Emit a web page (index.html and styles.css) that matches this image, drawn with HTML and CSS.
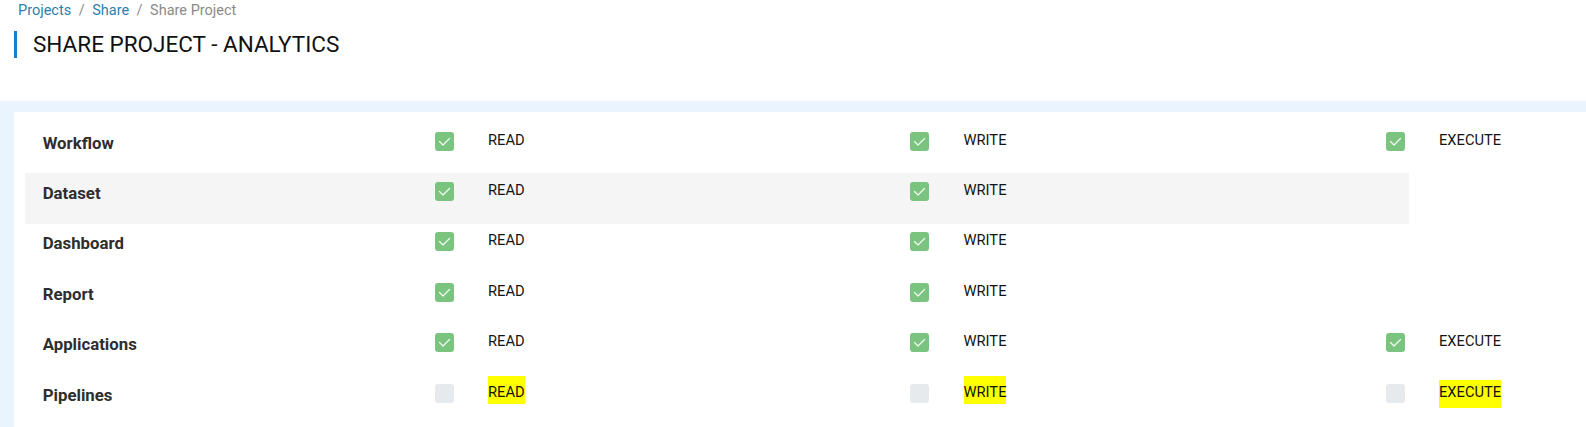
FILE: index.html
```html
<!DOCTYPE html>
<html lang="en">
<head>
<meta charset="utf-8">
<title>Share Project - Analytics</title>
<link rel="stylesheet" href="styles.css">
</head>
<body>
<div class="page">
  <nav class="crumbs">
    <a class="crumb-link" href="#">Projects</a><span class="sep">/</span><a class="crumb-link" href="#">Share</a><span class="sep">/</span><span class="crumb-current">Share Project</span>
  </nav>
  <h1 class="title">SHARE PROJECT - ANALYTICS</h1>
  <main class="band">
    <section class="panel">
      <div class="row">
        <div class="label">Workflow</div>
        <div class="perm"><span class="cb on"><svg viewBox="0 0 19 19"><polyline points="4.5,9.5 8,13 14.5,6.5"/></svg></span><span class="ptxt">READ</span></div>
        <div class="perm"><span class="cb on"><svg viewBox="0 0 19 19"><polyline points="4.5,9.5 8,13 14.5,6.5"/></svg></span><span class="ptxt">WRITE</span></div>
        <div class="perm"><span class="cb on"><svg viewBox="0 0 19 19"><polyline points="4.5,9.5 8,13 14.5,6.5"/></svg></span><span class="ptxt">EXECUTE</span></div>
      </div>
      <div class="row alt">
        <div class="label">Dataset</div>
        <div class="perm"><span class="cb on"><svg viewBox="0 0 19 19"><polyline points="4.5,9.5 8,13 14.5,6.5"/></svg></span><span class="ptxt">READ</span></div>
        <div class="perm"><span class="cb on"><svg viewBox="0 0 19 19"><polyline points="4.5,9.5 8,13 14.5,6.5"/></svg></span><span class="ptxt">WRITE</span></div>
      </div>
      <div class="row">
        <div class="label">Dashboard</div>
        <div class="perm"><span class="cb on"><svg viewBox="0 0 19 19"><polyline points="4.5,9.5 8,13 14.5,6.5"/></svg></span><span class="ptxt">READ</span></div>
        <div class="perm"><span class="cb on"><svg viewBox="0 0 19 19"><polyline points="4.5,9.5 8,13 14.5,6.5"/></svg></span><span class="ptxt">WRITE</span></div>
      </div>
      <div class="row">
        <div class="label">Report</div>
        <div class="perm"><span class="cb on"><svg viewBox="0 0 19 19"><polyline points="4.5,9.5 8,13 14.5,6.5"/></svg></span><span class="ptxt">READ</span></div>
        <div class="perm"><span class="cb on"><svg viewBox="0 0 19 19"><polyline points="4.5,9.5 8,13 14.5,6.5"/></svg></span><span class="ptxt">WRITE</span></div>
      </div>
      <div class="row">
        <div class="label">Applications</div>
        <div class="perm"><span class="cb on"><svg viewBox="0 0 19 19"><polyline points="4.5,9.5 8,13 14.5,6.5"/></svg></span><span class="ptxt">READ</span></div>
        <div class="perm"><span class="cb on"><svg viewBox="0 0 19 19"><polyline points="4.5,9.5 8,13 14.5,6.5"/></svg></span><span class="ptxt">WRITE</span></div>
        <div class="perm"><span class="cb on"><svg viewBox="0 0 19 19"><polyline points="4.5,9.5 8,13 14.5,6.5"/></svg></span><span class="ptxt">EXECUTE</span></div>
      </div>
      <div class="row">
        <div class="label">Pipelines</div>
        <div class="perm"><span class="cb off"></span><span class="ptxt"><span class="hl">READ</span></span></div>
        <div class="perm"><span class="cb off"></span><span class="ptxt"><span class="hl">WRITE</span></span></div>
        <div class="perm"><span class="cb off"></span><span class="ptxt"><span class="hl hl-low">EXECUTE</span></span></div>
      </div>
    </section>
  </main>
</div>
</body>
</html>
```

FILE: styles.css
```css
html, body {
  margin: 0;
  padding: 0;
  overflow: hidden;
  background: #ffffff;
}

body {
  font-family: Roboto, "Liberation Sans", Arial, sans-serif;
  color: #1a1a1a;
}

.page {
  height: 100vh;
  display: flex;
  flex-direction: column;
}

.crumbs {
  padding: 1px 0 0 18px;
  font-size: 14.5px;
  line-height: 20px;
  height: 19px;
}

.crumb-link {
  color: #2a7fad;
  text-decoration: none;
}

.sep {
  color: #8c8c8c;
  margin: 0 7.5px;
}

.crumb-current {
  color: #8a8a8a;
}

.title {
  margin: 11px 0 0 14px;
  padding-left: 16px;
  border-left: 3px solid #1b7fc4;
  font-size: 22.5px;
  font-weight: 400;
  line-height: 27px;
  height: 27px;
  color: #111111;
}

.band {
  margin-top: 42.6px;
  flex: 1;
  background: #e9f4fe;
  padding: 11.4px 0 0 14px;
  display: flex;
  flex-direction: column;
  min-height: 0;
}

.panel {
  flex: 1;
  background: #ffffff;
  padding: 11px 0 0 11px;
  overflow: hidden;
}

.row {
  display: flex;
  align-items: flex-start;
  width: max-content;
  height: 50.4px;
  box-sizing: border-box;
  padding: 8.7px 23.5px 0 0;
}

.row.alt {
  background: #f5f5f5;
}

.label {
  width: 409.5px;
  box-sizing: border-box;
  padding-left: 17.7px;
  font-size: 16.8px;
  font-weight: 700;
  line-height: 23px;
  color: #2e2e2e;
}

.perm {
  width: 475.5px;
  display: flex;
  align-items: flex-start;
}

.cb {
  width: 19px;
  height: 19px;
  border-radius: 3px;
  flex: none;
  display: block;
}

.cb svg {
  display: block;
  width: 19px;
  height: 19px;
}

.cb svg polyline {
  fill: none;
  stroke: rgba(255, 255, 255, 0.92);
  stroke-width: 1.2;
  stroke-linecap: round;
  stroke-linejoin: round;
}

.cb.on {
  background: #7bc47f;
}

.cb.off {
  background: #e7eaed;
}

.ptxt {
  margin-left: 34.5px;
  font-size: 14.7px;
  line-height: 17px;
  color: #141414;
}

.hl {
  background: #ffff00;
  padding: 7px 0 3px 0;
}

.hl-low {
  padding: 3px 0 7px 0;
}
```
